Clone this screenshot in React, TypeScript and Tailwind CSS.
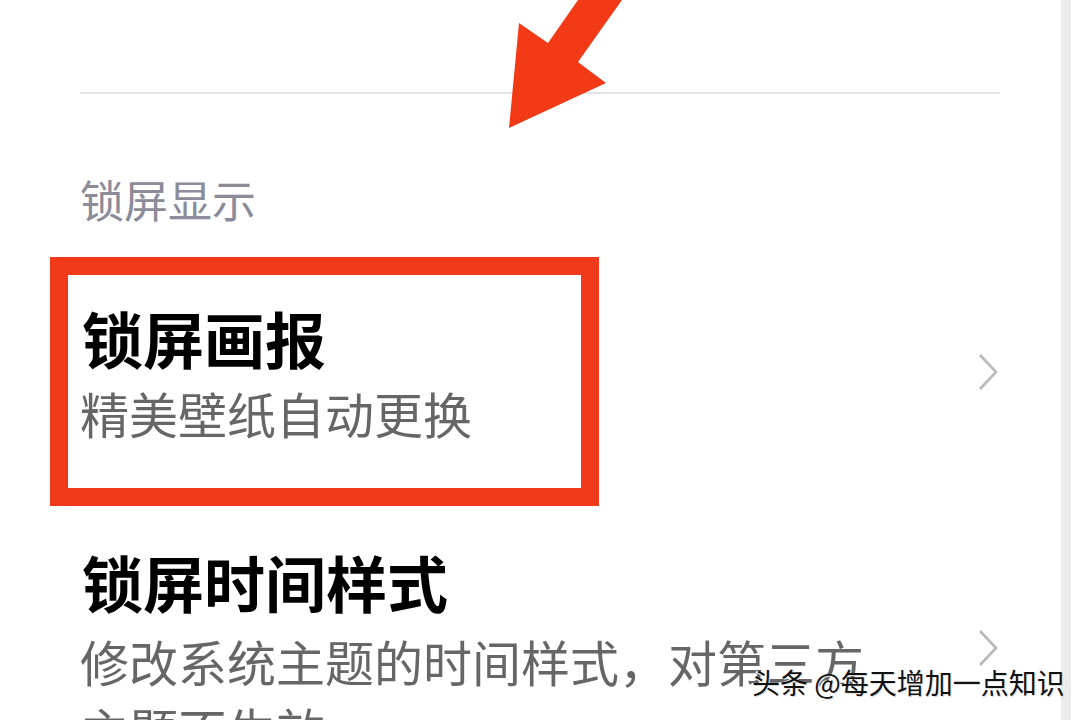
import React from "react";

const CJK = { fontFamily: '"Noto Sans CJK SC", "Noto Sans", sans-serif' };

function Chevron() {
  return (
    <svg width="22" height="38" viewBox="0 0 22 38" className="shrink-0">
      <polyline points="3,2 19,19 3,36" fill="none" stroke="#b9b9b9" strokeWidth="2.6" strokeLinejoin="miter" />
    </svg>
  );
}

export default function App() {
  return (
    <div className="relative w-[1080px] h-[720px] overflow-hidden bg-white flex" style={CJK}>
      <div className="block w-[1061px] shrink-0">
        <div className="h-[92px]" />
        <div className="ml-[80px] w-[920px] h-[2px] bg-[#e4e4e4]" />
        <div className="mt-[83px] pl-[80px] text-[44px] leading-none text-[#8b8b99]">锁屏显示</div>

        <div className="mt-[86px] flex items-center justify-between pr-[62px]">
          <div className="pl-[82px] flex flex-col">
            <div className="text-[61px] leading-none font-bold text-black">锁屏画报</div>
            <div className="mt-[20px] text-[49px] leading-none text-[#666666] -ml-[2px]">精美壁纸自动更换</div>
          </div>
          <Chevron />
        </div>

        <div className="mt-[114px] flex items-start justify-between pr-[62px]">
          <div className="pl-[82px] flex flex-col">
            <div className="text-[61px] leading-none font-bold text-black">锁屏时间样式</div>
            <div className="mt-[15px] text-[49px] leading-[68px] text-[#666666] w-[820px] -ml-[2px]">
              修改系统主题的时间样式，对第三方
              <br />
              主题不生效
            </div>
          </div>
          <div className="mt-[78px]">
            <Chevron />
          </div>
        </div>
      </div>
      <div className="w-[10px] h-full shrink-0 bg-[#ececec]" />
      <div className="flex-1 bg-white" />

      {/* red highlight box */}
      <div className="absolute left-[50px] top-[257px] w-[549px] h-[249px] border-[18px] border-[#f03a1a]" />

      {/* red arrow */}
      <svg className="absolute left-0 top-0" width="1080" height="720" viewBox="0 0 1080 720">
        <polygon
          points="578,0 622,0 578,62 606,83 509,128 519,23 548,43"
          fill="#f23a17"
        />
      </svg>

      {/* watermark */}
      <div
        className="absolute left-[752px] top-[668px] text-[28px] leading-none text-[#111]"
        style={{ textShadow: "-2px 0 0 #fff, 1px 1px 0 #ddd" }}
      >
        头条 @每天增加一点知识
      </div>
    </div>
  );
}
